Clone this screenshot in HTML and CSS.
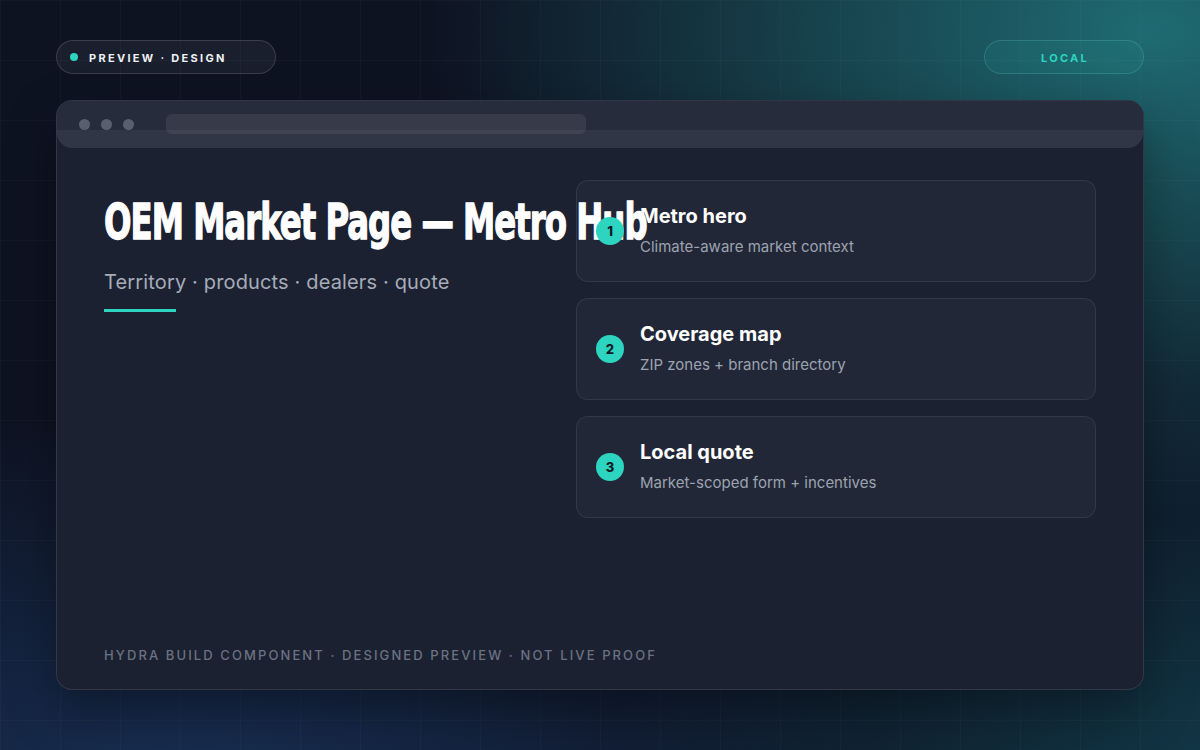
FILE: index.html
```html
<!DOCTYPE html>
<html lang="en">
<head>
  <meta charset="UTF-8" />
  <meta name="viewport" content="width=device-width, initial-scale=1.0" />
  <title>OEM Market Page — Metro Hub</title>
  <link rel="stylesheet" href="styles.css">
</head>
<body>
  <div class="stage">
    <header class="topbar">
      <div class="pill">
        <span class="pill-dot"></span>
        PREVIEW · DESIGN
      </div>
      <div class="pill pill-local">LOCAL</div>
    </header>

    <!-- browser frame -->
    <div class="window">
      <div class="chrome">
        <span class="dot"></span>
        <span class="dot"></span>
        <span class="dot"></span>
        <span class="url"></span>
      </div>

      <main class="content">
        <div class="intro">
          <h1><span class="title">OEM Market Page — Metro Hub</span></h1>
          <p class="lead">Territory · products · dealers · quote</p>
          <div class="accent"></div>
        </div>

        <ol class="steps">
          <li class="step">
            <span class="badge">1</span>
            <div>
              <h2>Metro hero</h2>
              <p>Climate-aware market context</p>
            </div>
          </li>
          <li class="step">
            <span class="badge">2</span>
            <div>
              <h2>Coverage map</h2>
              <p>ZIP zones + branch directory</p>
            </div>
          </li>
          <li class="step">
            <span class="badge">3</span>
            <div>
              <h2>Local quote</h2>
              <p>Market-scoped form + incentives</p>
            </div>
          </li>
        </ol>
      </main>

      <footer class="note">HYDRA BUILD COMPONENT · DESIGNED PREVIEW · NOT LIVE PROOF</footer>
    </div>
  </div>
</body>
</html>
```

FILE: styles.css
```css
:root {
  --teal: #2dd4bf;
  --ink: #f5f7fa;
  --muted: #9ca3b0;
  --line: rgba(255, 255, 255, 0.1);
}

* { box-sizing: border-box; margin: 0; padding: 0; }

html, body { height: 100%; }

body {
  font-family: Inter, "Noto Sans", sans-serif;
  color: var(--ink);
  background:
    linear-gradient(rgba(255,255,255,0.022) 1px, transparent 1px) 0 0 / 60px 60px,
    linear-gradient(90deg, rgba(255,255,255,0.022) 1px, transparent 1px) 0 0 / 60px 60px,
    radial-gradient(ellipse 60% 65% at 96% 4%, rgba(34, 122, 128, 0.85), transparent 100%),
    radial-gradient(ellipse 60% 50% at 15% 105%, rgba(28, 58, 104, 0.7), transparent 100%),
    radial-gradient(ellipse 50% 50% at 100% 100%, rgba(20, 76, 92, 0.6), transparent 100%),
    #0e1322;
  overflow: hidden;
}

.stage { padding: 40px 56px; }

.topbar {
  display: flex;
  justify-content: space-between;
  align-items: center;
  margin-bottom: 26px;
}

.pill {
  height: 34px;
  width: 220px;
  border-radius: 17px;
  border: 1px solid rgba(255, 255, 255, 0.14);
  background: rgba(255, 255, 255, 0.05);
  display: flex;
  align-items: center;
  padding-left: 13px;
  padding-top: 2px;
  font-size: 11px;
  font-weight: 700;
  letter-spacing: 2.3px;
  color: #eef1f5;
}
.pill-dot {
  width: 8px; height: 8px;
  border-radius: 50%;
  background: var(--teal);
  margin-right: 11px;
  margin-top: -3px;
}
.pill-local {
  width: 160px;
  justify-content: center;
  padding-left: 2px;
  color: var(--teal);
  background: rgba(45, 212, 191, 0.07);
  border-color: rgba(120, 220, 210, 0.2);
}

.window {
  height: 590px;
  border-radius: 16px;
  border: 1px solid var(--line);
  background: #1b2131;
  display: flex;
  flex-direction: column;
  box-shadow: 0 20px 50px rgba(0, 0, 0, 0.35);
}

.chrome {
  height: 47px;
  border-radius: 15px;
  background: linear-gradient(#272c3c 0 29px, #313646 29px);
  display: flex;
  align-items: center;
  padding: 0 0 0 22px;
  gap: 11px;
}
.dot {
  width: 11px; height: 11px;
  border-radius: 50%;
  background: #5a5f6e;
}
.url {
  width: 420px;
  height: 20px;
  margin-left: 21px;
  margin-top: -1px;
  border-radius: 6px;
  background: rgba(255, 255, 255, 0.07);
}

.content {
  display: grid;
  grid-template-columns: 448px 1fr;
  gap: 24px;
  padding: 32px 47px 0;
}

.intro h1 {
  font-family: "DejaVu Sans", sans-serif;
  font-stretch: condensed;
  font-size: 50px;
  font-weight: 700;
  line-height: 56px;
  margin-top: 14px;
  white-space: nowrap;
  color: #ffffff;
}
.title {
  display: inline-block;
  letter-spacing: -1.4px;
  -webkit-text-stroke: 1.3px #ffffff;
  transform: scaleX(0.72);
  transform-origin: left center;
}
.lead {
  margin-top: 18px;
  font-size: 20px;
  line-height: 28px;
  letter-spacing: 0.15px;
  color: #a6acb8;
}
.accent {
  width: 72px;
  height: 3px;
  margin-top: 13px;
  background: var(--teal);
}

.steps {
  list-style: none;
  display: flex;
  flex-direction: column;
  gap: 16px;
  position: relative;
  z-index: 1;
}
.step {
  height: 102px;
  border-radius: 12px;
  border: 1px solid rgba(255, 255, 255, 0.08);
  background: rgba(255, 255, 255, 0.03);
  display: flex;
  align-items: center;
  gap: 16px;
  padding: 0 19px 2px;
}
.badge {
  width: 28px; height: 28px;
  flex: none;
  border-radius: 50%;
  background: var(--teal);
  color: #0e1a24;
  font-size: 13px;
  font-weight: 800;
  display: flex;
  align-items: center;
  justify-content: center;
  margin-top: 2px;
}
.step h2 {
  font-size: 20px;
  font-weight: 700;
  line-height: 28px;
  color: #ffffff;
}
.step p {
  margin-top: 6px;
  font-size: 15px;
  line-height: 22px;
  color: var(--muted);
}

.note {
  margin-top: auto;
  padding: 0 47px 26px;
  font-size: 13px;
  font-weight: 500;
  letter-spacing: 2.1px;
  color: #6b7282;
}
```
